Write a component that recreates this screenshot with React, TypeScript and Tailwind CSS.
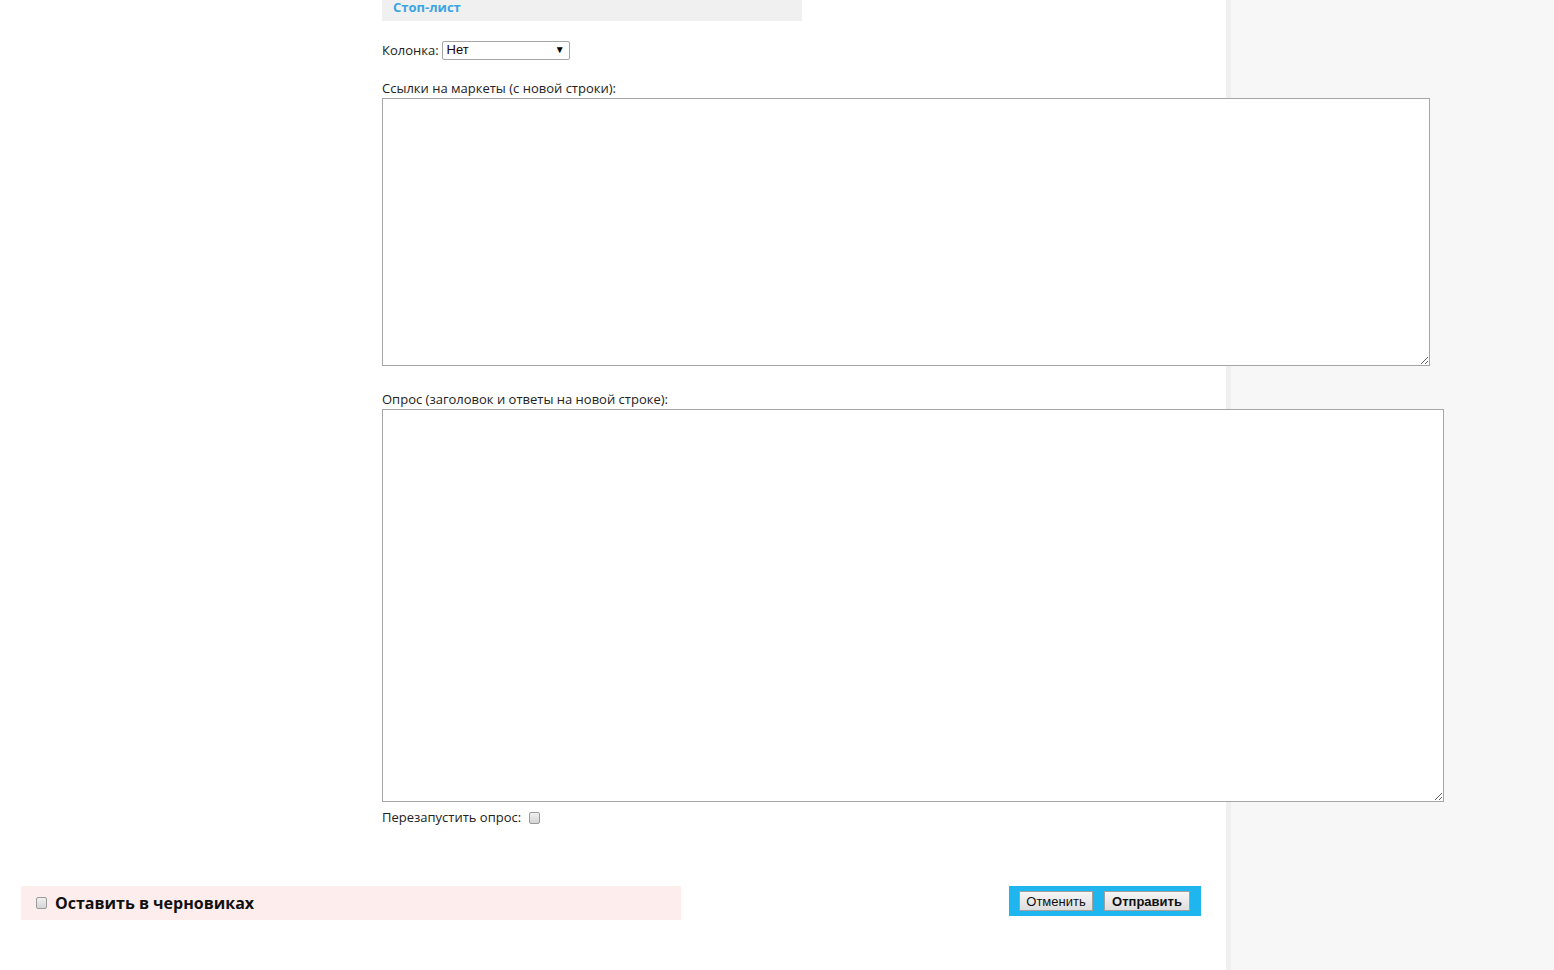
import React from "react";

const CB = ({ cls = "" }: { cls?: string }) => (
  <span
    className={
      "inline-block w-[11px] h-[12px] rounded-[2px] border border-[#9a9a9a] bg-gradient-to-b from-[#f0f0f0] to-[#d4d4d4] " +
      cls
    }
  />
);

export default function App() {
  return (
    <div className="flex h-[970px] w-[1554px] overflow-hidden bg-white font-['Open_Sans',sans-serif] text-[13px] text-[#222]">
      <div className="flex w-[1226px] shrink-0 flex-col">
        <div className="ml-[382px] flex flex-col">
          <div className="h-[21px] w-[420px] bg-[#f0f0f0] pl-[11px]">
            <span className="block text-[13px] font-bold leading-[15px] text-[#3ba4e3]">Стоп-лист</span>
          </div>
          <div className="mt-[20px] flex h-[18px] items-center">
            <span className="leading-[18px]">Колонка:</span>
            <div className="ml-[3px] flex h-[19px] w-[128px] items-center justify-between rounded-[2px] border border-[#a6a6a6] bg-white pl-[4px] pr-[4px] font-['Liberation_Sans',Arial,sans-serif] text-[13px] text-[#1a0000]">
              <span>Нет</span>
              <span className="text-[10px] leading-none text-black">▼</span>
            </div>
          </div>
          <div className="mt-[20px] h-[19px] leading-[18px]">Ссылки на маркеты (с новой строки):</div>
          <textarea className="relative z-10 block h-[268px] w-[1048px] resize border border-[#a6a6a6] bg-white outline-none" />
          <div className="mt-[24px] h-[19px] leading-[18px]">Опрос (заголовок и ответы на новой строке):</div>
          <textarea className="relative z-10 block h-[393px] w-[1062px] resize border border-[#a6a6a6] bg-white outline-none" />
          <div className="mt-[6px] flex h-[18px] items-center">
            <span className="leading-[18px]">Перезапустить опрос:</span>
            <CB cls="ml-[8px] mt-[2px]" />
          </div>
        </div>
        <div className="mt-[60px] flex items-start justify-between pl-[21px] pr-[25px]">
          <div className="flex h-[34px] w-[660px] items-center bg-[#fdeded] pl-[15px]">
            <CB />
            <span className="ml-[8px] text-[16px] font-bold leading-[20px] text-[#111]">Оставить в черновиках</span>
          </div>
          <div className="flex h-[30px] w-[192px] items-start gap-[11px] bg-[#1fb5ee] pl-[10px] pt-[5px] font-['Liberation_Sans',Arial,sans-serif] text-[13px] text-[#111]">
            <button className="flex h-[20px] w-[74px] items-center justify-center border border-[#a0a0a0] bg-gradient-to-b from-[#f6f6f6] to-[#dedede] leading-none">
              Отменить
            </button>
            <button className="flex h-[20px] w-[86px] items-center justify-center border border-[#a0a0a0] bg-gradient-to-b from-[#f6f6f6] to-[#dedede] font-bold leading-none">
              Отправить
            </button>
          </div>
        </div>
      </div>
      <div className="w-[5px] shrink-0 bg-[#efefef]" />
      <div className="flex-1 bg-[#f7f7f7]" />
    </div>
  );
}
